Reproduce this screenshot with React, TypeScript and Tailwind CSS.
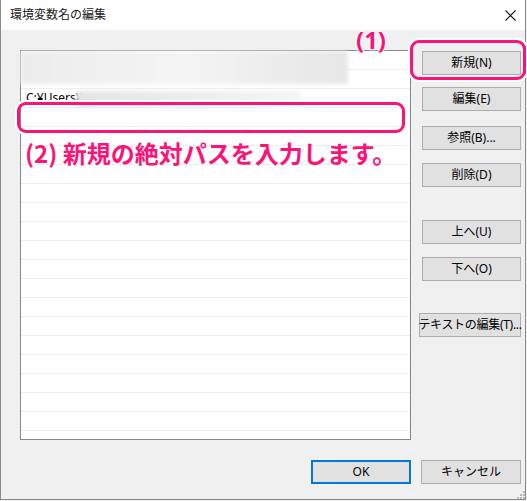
import React from "react";

const PINK = "#fa1478";

const UiButton = ({ label, className = "" }: { label: string; className?: string }) => (
  <div
    className={`h-[24px] flex items-center justify-center bg-[#e1e1e1] border border-[#adadad] text-[12px] text-black whitespace-nowrap ${className}`}
  >
    {label}
  </div>
);

const App = () => {
  const rows = Array.from({ length: 20 });

  return (
    <div
      className="relative w-[527px] h-[501px] overflow-hidden bg-[#f0f0f0]"
      style={{ fontFamily: '"Noto Sans", "Noto Sans CJK JP", sans-serif' }}
    >
      {/* window frame */}
      <div className="flex flex-col w-[526px] h-[500px] border-l border-r border-b border-[#8a8a8a]">
        {/* title bar */}
        <div className="h-[30px] bg-white flex items-center justify-between pl-[9px] pr-[10px]">
          <span className="text-[12px] text-[#1a1a1a] leading-none">環境変数名の編集</span>
          <svg width="11" height="11" viewBox="0 0 11 11" className="mr-[-1px]">
            <path d="M0.5 0.5 L10.5 10.5 M10.5 0.5 L0.5 10.5" stroke="#111" strokeWidth="1.1" />
          </svg>
        </div>

        {/* body */}
        <div className="flex-1 flex flex-col bg-[#f0f0f0] pl-[19px]">
          <div className="flex pt-[20px]">
            {/* list box */}
            <div className="w-[391px] h-[390px] bg-white border border-[#828790] flex flex-col">
              {rows.map((_, i) => (
                <div
                  key={i}
                  className="h-[19px] shrink-0 border-b border-[#efefef] flex items-center pl-[5px] text-[12px] text-black"
                >
                  {i === 2 ? "C:¥Users¥" : ""}
                </div>
              ))}
            </div>

            {/* button column */}
            <div className="flex flex-col ml-[11px] w-[99px] pt-[1px]">
              <UiButton label="新規(N)" />
              <UiButton label="編集(E)" className="mt-[12px]" />
              <UiButton label="参照(B)..." className="mt-[15px]" />
              <UiButton label="削除(D)" className="mt-[13px]" />
              <UiButton label="上へ(U)" className="mt-[33px]" />
              <UiButton label="下へ(O)" className="mt-[13px]" />
              <UiButton label="テキストの編集(T)..." className="mt-[32px] -ml-[3px] w-[102px] tracking-[-0.3px]" />
            </div>
          </div>

          {/* OK / cancel */}
          <div className="flex justify-end gap-[10px] mt-[20px] pr-[4px]">
            <div className="w-[100px] h-[24px] flex items-center justify-center bg-[#e1e1e1] border-2 border-[#0078d7] text-[12px] text-black">
              OK
            </div>
            <UiButton label="キャンセル" className="w-[100px]" />
          </div>
        </div>
      </div>

      {/* resize grip */}
      <svg className="absolute right-[2px] bottom-[2px]" width="10" height="10" viewBox="0 0 10 10">
        {[
          [8, 2],
          [5, 5],
          [8, 5],
          [2, 8],
          [5, 8],
          [8, 8],
        ].map(([x, y], i) => (
          <rect key={i} x={x} y={y} width="2" height="2" fill="#b8b8b8" />
        ))}
      </svg>

      {/* blurred private rows */}
      <div className="absolute left-[20px] top-[51px] w-[328px] h-[33px] bg-gradient-to-r from-[#ececec] via-[#f4f4f4] to-[#e6e6e6] blur-[2px]" />
      <div className="absolute left-[76px] top-[91px] w-[226px] h-[16px] bg-gradient-to-r from-[#e4e4e4] via-[#ededed] to-[#f6f6f6] blur-[2px]" />

      {/* annotation (1) */}
      <div
        className="absolute left-[356px] top-[25px] text-[24px] font-bold leading-[29px]"
        style={{
          color: PINK,
          textShadow: "0 0 2px #fff, 0 0 2px #fff, 0 0 3px #fff, 0 0 3px #fff",
        }}
      >
        (1)
      </div>
      <div
        className="absolute left-[410px] top-[40px] w-[116px] h-[40px] rounded-[9px] border-[3px] shadow-[0_0_0_2px_#fff]"
        style={{ borderColor: PINK }}
      />

      {/* annotation (2) */}
      <div
        className="absolute left-[17px] top-[102px] w-[388px] h-[31px] rounded-[9px] border-[3px] shadow-[0_0_0_2px_#fff]"
        style={{ borderColor: PINK }}
      />
      <div
        className="absolute left-[25px] top-[137px] text-[24px] font-bold leading-[32px] whitespace-nowrap"
        style={{ color: PINK, fontFamily: '"Noto Sans CJK JP", sans-serif' }}
      >
        (2) 新規の絶対パスを入力します。
      </div>
    </div>
  );
};

export default App;
